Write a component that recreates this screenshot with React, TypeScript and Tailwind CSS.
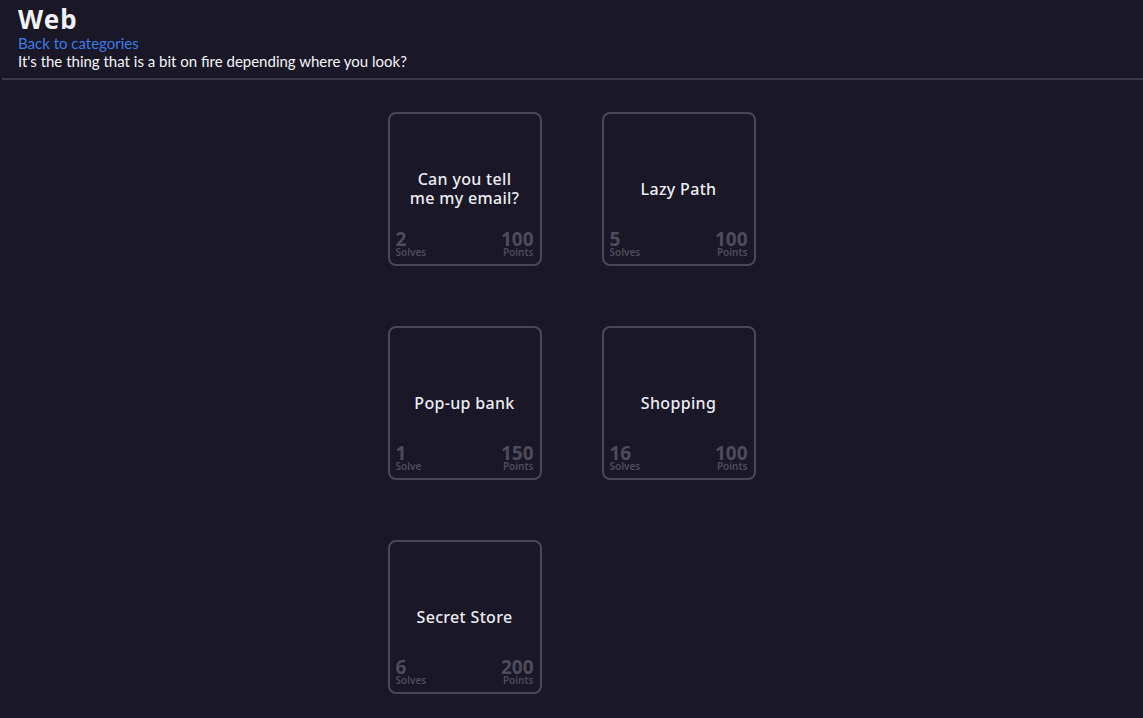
import React from 'react';

type Challenge = {
  name: string;
  solves: number;
  points: number;
};

const challenges: Challenge[] = [
  { name: 'Can you tell me my email?', solves: 2, points: 100 },
  { name: 'Lazy Path', solves: 5, points: 100 },
  { name: 'Pop-up bank', solves: 1, points: 150 },
  { name: 'Shopping', solves: 16, points: 100 },
  { name: 'Secret Store', solves: 6, points: 200 },
];

const heading = { fontFamily: '"Noto Sans", Inter, sans-serif' };

const ChallengeCard: React.FC<{ challenge: Challenge }> = ({ challenge }) => (
  <div className="relative w-[154px] h-[154px] rounded-lg border-2 border-[#4b4856] bg-[#1a1726] flex items-center justify-center px-[14px] cursor-pointer">
    <span className="max-w-[116px] text-center text-[16px] leading-[19px] font-medium tracking-[0.02em] text-[#ececf1]" style={heading}>
      {challenge.name}
    </span>
    <div className="absolute bottom-[7px] left-[6px] flex flex-col text-[#4e4b5a]" style={heading}>
      <span className="text-[19px] font-bold leading-[16px]">{challenge.solves}</span>
      <span className="text-[10px] font-semibold leading-[10px]">{challenge.solves === 1 ? 'Solve' : 'Solves'}</span>
    </div>
    <div className="absolute bottom-[7px] right-[6px] flex flex-col items-end text-[#4e4b5a]" style={heading}>
      <span className="text-[19px] font-bold leading-[16px]">{challenge.points}</span>
      <span className="text-[10px] font-semibold leading-[10px]">Points</span>
    </div>
  </div>
);

const App: React.FC = () => {
  return (
    <div className="min-h-[718px] bg-[#1a1726] text-white" style={{ fontFamily: 'Lato, sans-serif' }}>
      <header className="px-[18px] pt-[4px] pb-[8px]">
        <h1 className="text-[26px] leading-[30px] font-bold tracking-[0.04em] text-[#f2f2f5]" style={heading}>Web</h1>
        <a href="#" className="block text-[15px] leading-[18px] text-[#3d7be6]">Back to categories</a>
        <p className="text-[15px] leading-[18px] text-[#f4f4f6]">It's the thing that is a bit on fire depending where you look?</p>
      </header>
      <div className="ml-[2px] h-[2px] bg-[#3a3744]" />
      <main className="flex justify-center pt-[32px]">
        <div className="grid grid-cols-[154px_154px] gap-x-[60px] gap-y-[60px]">
          {challenges.map((c) => (
            <ChallengeCard key={c.name} challenge={c} />
          ))}
        </div>
      </main>
    </div>
  );
};

export default App;
